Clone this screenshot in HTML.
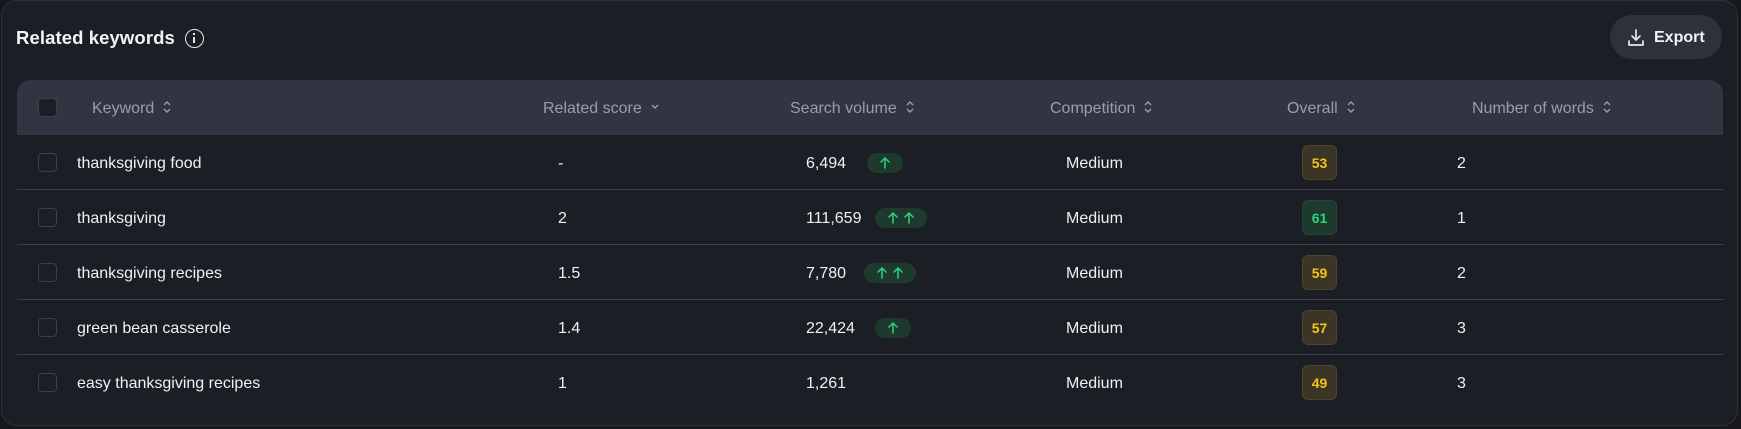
<!DOCTYPE html>
<html><head><meta charset="utf-8"><style>
*{box-sizing:border-box;margin:0;padding:0}
html,body{width:1741px;height:429px;background:#17181d;overflow:hidden;font-family:"Liberation Sans",sans-serif}
.card{position:absolute;left:1px;top:0;width:1737px;height:426px;background:#1c1e26;border:1px solid #2e3039;border-radius:16px}
.title{position:absolute;left:16px;top:27px;color:#f2f3f5;font-size:18.5px;font-weight:bold;letter-spacing:0.1px}
.info{position:absolute;left:185px;top:29px;width:19px;height:19px;border:1.6px solid #e8e9ec;border-radius:50%}
.info:before{content:"";position:absolute;left:7px;top:7px;width:2px;height:6px;background:#e8e9ec}
.info:after{content:"";position:absolute;left:7px;top:3px;width:2px;height:2px;background:#e8e9ec}
.export{position:absolute;left:1610px;top:15px;width:112px;height:44px;border-radius:22px;background:#2e303b;color:#f2f3f5;font-weight:bold;font-size:16px}
.export span{position:absolute;left:44px;top:14px}
.export svg{position:absolute;left:16px;top:13px}
.head{position:absolute;left:17px;top:80px;width:1706px;height:55px;background:#323441;border-radius:14px 14px 0 0}
.h{position:absolute;top:20px;color:#9a9dae;font-size:16px;white-space:nowrap}
.h svg{vertical-align:middle;margin-left:8px;margin-top:-3px}
.cb{position:absolute;width:19px;height:19px;border:1.5px solid #3d3f4a;border-radius:4px;left:21px}
.head .cb{top:18px;background:#1c1e26}
.row{position:absolute;left:17px;width:1706px;height:55px;border-bottom:1px solid #3c3e48}
.row .cb{top:18px}
.c{position:absolute;top:20px;color:#f0f1f3;font-size:16px;white-space:nowrap}
.pill{position:absolute;top:18px;height:20px;border-radius:10px;background:#1e3a2e}
.badge{position:absolute;left:1285px;top:10px;width:35px;height:35px;border-radius:6px;font-size:14px;font-weight:bold;text-align:center;line-height:35px}
.y{background:#3a3526;border:1px solid #4e4529;color:#f5c518}
.g{background:#1e3a2e;border:1px solid #244634;color:#2ed47a}
</style></head><body>
<div class="card"></div>
<div class="title">Related keywords</div><div class="info"></div>
<div class="export"><svg width="20" height="20" viewBox="0 0 20 20" fill="none" stroke="#e8e9ec" stroke-width="1.7" stroke-linecap="round" stroke-linejoin="round"><path d="M10 2v10M6 8l4 4 4-4M3 13v4h14v-4"/></svg><span>Export</span></div>
<div class="head">
<div class="cb"></div>
<div class="h" style="left:75px">Keyword<svg width="10" height="14" viewBox="0 0 10 14" fill="none" stroke="#9a9dae" stroke-width="1.4"><path d="M2 5l3-3 3 3M2 9l3 3 3-3"/></svg></div>
<div class="h" style="left:526px">Related score<svg width="10" height="8" viewBox="0 0 10 8" fill="none" stroke="#9a9dae" stroke-width="1.4"><path d="M2 2l3 3 3-3"/></svg></div>
<div class="h" style="left:773px">Search volume<svg width="10" height="14" viewBox="0 0 10 14" fill="none" stroke="#9a9dae" stroke-width="1.4"><path d="M2 5l3-3 3 3M2 9l3 3 3-3"/></svg></div>
<div class="h" style="left:1033px">Competition<svg width="10" height="14" viewBox="0 0 10 14" fill="none" stroke="#9a9dae" stroke-width="1.4"><path d="M2 5l3-3 3 3M2 9l3 3 3-3"/></svg></div>
<div class="h" style="left:1270px">Overall<svg width="10" height="14" viewBox="0 0 10 14" fill="none" stroke="#9a9dae" stroke-width="1.4"><path d="M2 5l3-3 3 3M2 9l3 3 3-3"/></svg></div>
<div class="h" style="left:1455px">Number of words<svg width="10" height="14" viewBox="0 0 10 14" fill="none" stroke="#9a9dae" stroke-width="1.4"><path d="M2 5l3-3 3 3M2 9l3 3 3-3"/></svg></div>
</div>

<div class="row" style="top:135px"><div class="cb"></div><div class="c" style="left:60px">thanksgiving food</div><div class="c" style="left:541px">-</div><div class="c" style="left:789px">6,494</div>
<div class="pill" style="left:850px;width:36px"><svg width="36" height="20" viewBox="0 0 36 20" fill="none" stroke="#2ed47a" stroke-width="1.5" stroke-linecap="round"><path d="M18 15V5M14 9l4-4 4 4"/></svg></div>
<div class="c" style="left:1049px">Medium</div><div class="badge y">53</div><div class="c" style="left:1440px">2</div></div>

<div class="row" style="top:190px"><div class="cb"></div><div class="c" style="left:60px">thanksgiving</div><div class="c" style="left:541px">2</div><div class="c" style="left:789px">111,659</div>
<div class="pill" style="left:858px;width:52px"><svg width="52" height="20" viewBox="0 0 52 20" fill="none" stroke="#2ed47a" stroke-width="1.5" stroke-linecap="round"><path d="M18 15V5M14 9l4-4 4 4M34 15V5M30 9l4-4 4 4"/></svg></div>
<div class="c" style="left:1049px">Medium</div><div class="badge g">61</div><div class="c" style="left:1440px">1</div></div>

<div class="row" style="top:245px"><div class="cb"></div><div class="c" style="left:60px">thanksgiving recipes</div><div class="c" style="left:541px">1.5</div><div class="c" style="left:789px">7,780</div>
<div class="pill" style="left:847px;width:52px"><svg width="52" height="20" viewBox="0 0 52 20" fill="none" stroke="#2ed47a" stroke-width="1.5" stroke-linecap="round"><path d="M18 15V5M14 9l4-4 4 4M34 15V5M30 9l4-4 4 4"/></svg></div>
<div class="c" style="left:1049px">Medium</div><div class="badge y">59</div><div class="c" style="left:1440px">2</div></div>

<div class="row" style="top:300px"><div class="cb"></div><div class="c" style="left:60px">green bean casserole</div><div class="c" style="left:541px">1.4</div><div class="c" style="left:789px">22,424</div>
<div class="pill" style="left:858px;width:36px"><svg width="36" height="20" viewBox="0 0 36 20" fill="none" stroke="#2ed47a" stroke-width="1.5" stroke-linecap="round"><path d="M18 15V5M14 9l4-4 4 4"/></svg></div>
<div class="c" style="left:1049px">Medium</div><div class="badge y">57</div><div class="c" style="left:1440px">3</div></div>

<div class="row" style="top:355px;border-bottom:none"><div class="cb"></div><div class="c" style="left:60px">easy thanksgiving recipes</div><div class="c" style="left:541px">1</div><div class="c" style="left:789px">1,261</div>
<div class="c" style="left:1049px">Medium</div><div class="badge y">49</div><div class="c" style="left:1440px">3</div></div>
</body></html>
